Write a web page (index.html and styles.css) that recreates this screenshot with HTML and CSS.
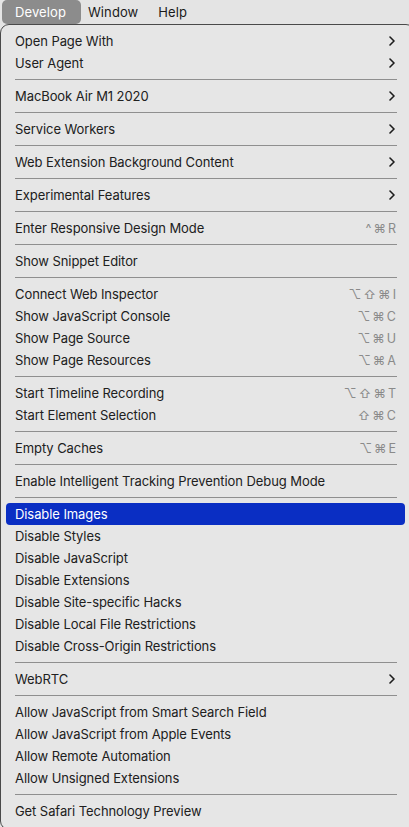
FILE: index.html
```html
<!DOCTYPE html>
<html>
<head>
<meta charset="utf-8">
<link rel="stylesheet" href="styles.css">
</head>
<body>
<div class="menubar">
  <div class="mb-item active">Develop</div>
  <div class="mb-item after-active">Window</div>
  <div class="mb-item">Help</div>
</div>
<div class="menu">
  <div class="item"><span>Open Page With</span><svg class="chev" viewBox="0 0 6 10"><path d="M1 1 L5 5 L1 9"/></svg></div>
  <div class="item"><span>User Agent</span><svg class="chev" viewBox="0 0 6 10"><path d="M1 1 L5 5 L1 9"/></svg></div>
  <div class="sep"></div>
  <div class="item"><span>MacBook Air M1 2020</span><svg class="chev" viewBox="0 0 6 10"><path d="M1 1 L5 5 L1 9"/></svg></div>
  <div class="sep"></div>
  <div class="item"><span>Service Workers</span><svg class="chev" viewBox="0 0 6 10"><path d="M1 1 L5 5 L1 9"/></svg></div>
  <div class="sep"></div>
  <div class="item"><span>Web Extension Background Content</span><svg class="chev" viewBox="0 0 6 10"><path d="M1 1 L5 5 L1 9"/></svg></div>
  <div class="sep"></div>
  <div class="item"><span>Experimental Features</span><svg class="chev" viewBox="0 0 6 10"><path d="M1 1 L5 5 L1 9"/></svg></div>
  <div class="sep"></div>
  <div class="item"><span>Enter Responsive Design Mode</span><span class="sc">^⌘R</span></div>
  <div class="sep"></div>
  <div class="item"><span>Show Snippet Editor</span></div>
  <div class="sep"></div>
  <div class="item"><span>Connect Web Inspector</span><span class="sc">⌥⇧⌘I</span></div>
  <div class="item"><span>Show JavaScript Console</span><span class="sc">⌥⌘C</span></div>
  <div class="item"><span>Show Page Source</span><span class="sc">⌥⌘U</span></div>
  <div class="item"><span>Show Page Resources</span><span class="sc">⌥⌘A</span></div>
  <div class="sep"></div>
  <div class="item"><span>Start Timeline Recording</span><span class="sc">⌥⇧⌘T</span></div>
  <div class="item"><span>Start Element Selection</span><span class="sc">⇧⌘C</span></div>
  <div class="sep"></div>
  <div class="item"><span>Empty Caches</span><span class="sc">⌥⌘E</span></div>
  <div class="sep"></div>
  <div class="item"><span>Enable Intelligent Tracking Prevention Debug Mode</span></div>
  <div class="sep"></div>
  <div class="item selected"><span>Disable Images</span></div>
  <div class="item"><span>Disable Styles</span></div>
  <div class="item"><span>Disable JavaScript</span></div>
  <div class="item"><span>Disable Extensions</span></div>
  <div class="item"><span>Disable Site-specific Hacks</span></div>
  <div class="item"><span>Disable Local File Restrictions</span></div>
  <div class="item"><span>Disable Cross-Origin Restrictions</span></div>
  <div class="sep"></div>
  <div class="item"><span>WebRTC</span><svg class="chev" viewBox="0 0 6 10"><path d="M1 1 L5 5 L1 9"/></svg></div>
  <div class="sep"></div>
  <div class="item"><span>Allow JavaScript from Smart Search Field</span></div>
  <div class="item"><span>Allow JavaScript from Apple Events</span></div>
  <div class="item"><span>Allow Remote Automation</span></div>
  <div class="item"><span>Allow Unsigned Extensions</span></div>
  <div class="sep"></div>
  <div class="item"><span>Get Safari Technology Preview</span></div>
</div>
</body>
</html>
```

FILE: styles.css
```css
html, body {
  margin: 0;
  padding: 0;
  background: #e5e5e5;
  font-family: Inter, "Noto Sans", "DejaVu Sans", sans-serif;
  font-size: 13px;
  color: #202020;
  overflow: hidden;
}
.menubar {
  height: 24px;
  display: flex;
  align-items: stretch;
  padding-left: 2px;
  background: #e4e4e4;
}
.mb-item {
  display: flex;
  align-items: center;
  padding: 0 10px;
  font-size: 13px;
  color: #1a1a1a;
  letter-spacing: 0.1px;
}
.mb-item.active {
  background: #8c8c8c;
  color: #ffffff;
  border-radius: 5px;
  padding: 0 15px 0 13px;
}
.mb-item.after-active {
  padding-left: 7px;
}
.menu {
  box-sizing: border-box;
  width: 415px;
  border: 1px solid #4a4a4a;
  border-radius: 9px;
  background: #e6e6e6;
  padding: 5px 0 4px 5px;
  height: 806px;
}
.item {
  height: 22px;
  width: 399px;
  box-sizing: border-box;
  display: flex;
  align-items: center;
  justify-content: space-between;
  padding: 0 9px 0 9px;
  border-radius: 4px;
  white-space: nowrap;
  letter-spacing: -0.08px;
}
.item.selected {
  background: #0a2ec3;
  color: #ffffff;
}
.sc {
  color: #8a8a8a;
  letter-spacing: 2px;
  margin-right: -2px;
  font-size: 12.5px;
}
.chev {
  width: 6px;
  height: 10px;
  fill: none;
  stroke: #1d1d1d;
  stroke-width: 1.6;
  stroke-linecap: round;
  stroke-linejoin: round;
  margin-right: 1px;
}
.sep {
  height: 11px;
  display: flex;
  align-items: center;
  padding: 0 8px 0 9px;
  width: 399px;
  box-sizing: border-box;
}
.sep::before {
  content: "";
  display: block;
  width: 100%;
  height: 1px;
  background: #8f8f8f;
}
```
